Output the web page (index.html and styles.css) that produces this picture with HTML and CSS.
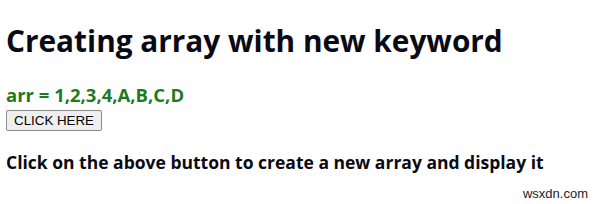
FILE: index.html
```html
<!DOCTYPE html>
<html>
<head>
<meta charset="utf-8">
<link rel="stylesheet" href="styles.css">
</head>
<body>
<h1 class="title">Creating array with new keyword</h1>
<div class="result">arr = 1,2,3,4,A,B,C,D</div>
<button class="btn">CLICK HERE</button>
<h3 class="note">Click on the above button to create a new array and display it</h3>
<div class="mark">wsxdn.com</div>
</body>
</html>
```
FILE: styles.css
```css
html, body { margin: 0; background: #fff; }
body {
  padding: 8px 6px;
  font-family: "Open Sans", "Noto Sans", sans-serif;
  color: #000;
  position: relative;
  height: 204px;
  box-sizing: border-box;
}
.title {
  font-size: 29.8px;
  font-weight: 700;
  margin: 13px 0 0;
  line-height: 40px;
  color: #0a0a14;
}
.result {
  margin-top: 23px;
  color: #217a21;
  font-size: 18.5px;
  font-weight: 700;
  line-height: 22px;
}
.btn {
  font-family: "Liberation Sans", Arial, sans-serif;
  font-size: 13.3px;
  padding: 1px 7px;
  margin-top: 4px;
  border: 1px solid #8a8a8a;
  border-radius: 2px;
  background: #efefef;
  color: #000;
  height: 21px;
  width: 96px;
  line-height: 17px;
  display: block;
}
.note {
  margin: 19px 0 0;
  font-size: 17.5px;
  font-weight: 700;
  line-height: 24px;
  color: #0a0a14;
}
.mark {
  position: absolute;
  right: 12px;
  bottom: 3px;
  font-family: "Liberation Sans", Arial, sans-serif;
  font-size: 13px;
  color: #222;
}
```
